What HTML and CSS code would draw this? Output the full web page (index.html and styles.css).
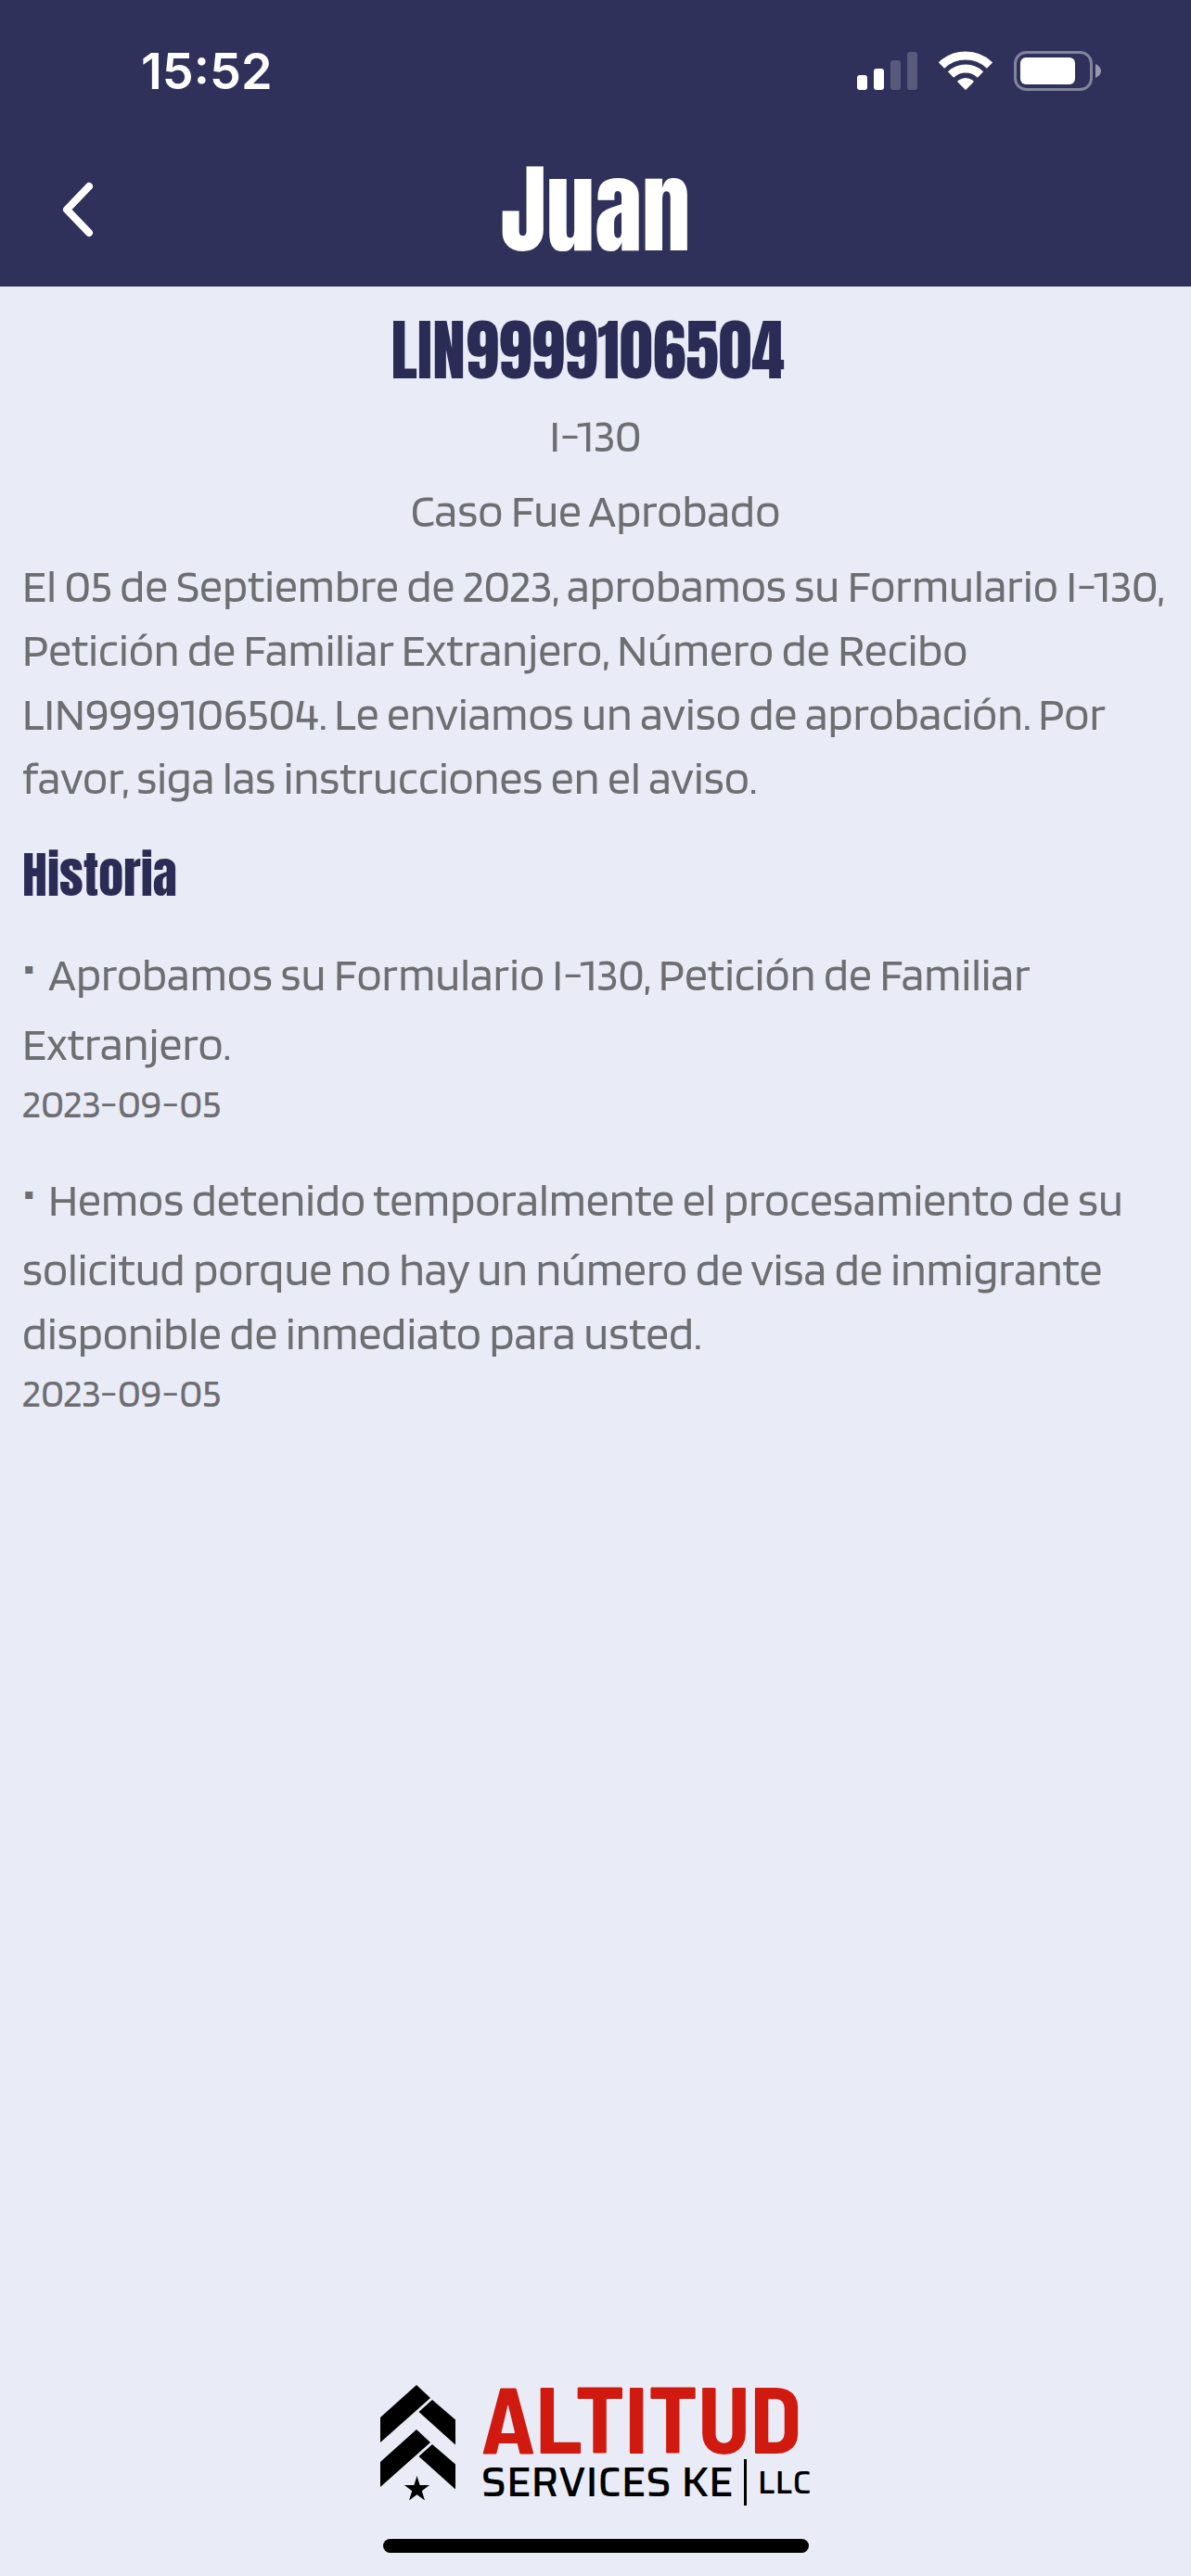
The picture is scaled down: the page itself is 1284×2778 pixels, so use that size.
FILE: index.html
```
<!DOCTYPE html>
<html lang="es">
<head>
	<meta charset="UTF-8">
	<meta name="viewport" content="width=device-width">
	<title>Juan</title>
	<link rel="stylesheet" href="styles.css">
</head>
<body>
	<header class="top">
		<div class="status">
			<span class="time">15:52</span>
			<div class="icons">
				<svg width="65" height="43" viewBox="0 0 65 43" fill="#fff">
					<rect x="0" y="26" width="11" height="16" rx="3"/>
					<rect x="18" y="19" width="11" height="23" rx="3"/>
					<rect x="36" y="10" width="11" height="32" rx="3" opacity=".2"/>
					<rect x="54" y="1" width="11" height="41" rx="3" opacity=".2"/>
				</svg>
				<svg width="58" height="43" viewBox="0 0 58 43">
					<g fill="none" stroke="#fff" stroke-width="9">
						<path d="M3 15.500A37.500 37.500 0 0 1 55 15.500"/>
						<path d="M13 25.500A23 23 0 0 1 45 25.500"/>
					</g>
					<path d="M29 42L20.500 33.500Q20 32.500 21 31.800Q29 26 37 31.800Q38 32.500 37.500 33.500Z" fill="#fff"/>
				</svg>
				<svg width="94" height="43" viewBox="0 0 94 43">
					<rect x="1.500" y="1.500" width="82" height="40" rx="12" fill="none" stroke="#fff" stroke-width="3" opacity=".4"/>
					<rect x="7" y="7" width="59" height="29" rx="6" fill="#fff"/>
					<path d="M88 14Q94 17 94 21.500Q94 26 88 29Z" fill="#fff" opacity=".5"/>
				</svg>
			</div>
		</div>
		<div class="bar">
			<button class="back" type="button" aria-label="Volver">
				<svg width="34" height="60" viewBox="0 0 34 60" fill="none" stroke="#fff" stroke-width="8" stroke-linecap="round" stroke-linejoin="round"><path d="M29 5L5 30L29 55"/></svg>
			</button>
			<h1>Juan</h1>
		</div>
	</header>

	<main class="case">
		<h2 class="receipt">LIN9999106504&nbsp;</h2>
		<p class="center">I-130</p>
		<p class="center">Caso Fue Aprobado</p>
		<p>El 05 de Septiembre de 2023, aprobamos su Formulario I-130, Petición de Familiar Extranjero, Número de Recibo LIN9999106504. Le enviamos un aviso de aprobación. Por favor, siga las instrucciones en el aviso.</p>
		<h3>Historia</h3>
		<ul class="history">
			<li>
				<p><span class="dot">▪</span>Aprobamos su Formulario I-130, Petición de Familiar Extranjero.</p>
				<time datetime="2023-09-05">2023-09-05</time>
			</li>
			<li>
				<p><span class="dot">▪</span>Hemos detenido temporalmente el procesamiento de su solicitud porque no hay un número de visa de inmigrante disponible de inmediato para usted.</p>
				<time datetime="2023-09-05">2023-09-05</time>
			</li>
		</ul>
	</main>

	<footer>
		<div class="logo">
			<svg width="81" height="125" viewBox="0 0 81 125">
				<path id="left" d="M0 35L39 0L54 14L0 62Z"/>
				<path id="right" d="M41.500 29L56 16L81 37.500V64.500Z"/>
				<use href="#left" y="48"/>
				<use href="#right" y="48"/>
				<path d="M39.500 98L42.600 108L53 108L44.800 114.200L48 124.500L39.500 118.200L31 124.500L34.200 114.200L26 108L36.400 108Z"/>
			</svg>
			<div class="name">
				<strong>ALTITUD</strong>
				<div class="sub">
					<span>SERVICES KE</span>
					<span class="llc">LLC</span>
				</div>
			</div>
		</div>
		<div class="home"></div>
	</footer>
</body>
</html>
```
FILE: styles.css
```
* {
	margin: 0;
	padding: 0;
	box-sizing: border-box;
}
body {
	min-height: 100vh;
	display: flex;
	flex-direction: column;
	background: #e9ecf6;
	color: #6e6e72;
	font-family: "Blinker", "Open Sans", sans-serif;
	font-size: 50px;
	line-height: 69px;
}
svg {
	display: block;
}

/* header */
.top {
	height: 309px;
	background: #30315a;
	color: #fff;
}
.status {
	display: flex;
	justify-content: space-between;
	align-items: center;
	height: 152px;
	padding: 0 97px 0 152px;
}
.time {
	font-family: "Inter", sans-serif;
	font-size: 54px;
	font-weight: 600;
}
.icons {
	display: flex;
	gap: 23px;
}
.bar {
	display: grid;
	grid-template-columns: 168px 1fr 168px;
	align-items: center;
	height: 148px;
}
.back {
	justify-self: center;
	border: none;
	background: none;
	cursor: pointer;
}
h1, h2, h3 {
	font-family: "Anton", "Roboto Condensed", sans-serif;
	font-weight: 400;
}
h1 {
	font-size: 105px;
	line-height: 148px;
	text-align: center;
}

/* case */
.case {
	padding: 15px 24px;
}
.receipt {
	margin-bottom: 3px;
	color: #2a2c55;
	font-size: 72px;
	line-height: 108px;
	text-align: center;
}
.case > p {
	margin-bottom: 12px;
}
.center {
	text-align: center;
}
h3 {
	margin: 30px 0 26px;
	color: #2a2c55;
	font-size: 54px;
	line-height: 80px;
}
.history {
	list-style: none;
}
.history li {
	margin-bottom: 32px;
}
.history p::first-line {
	line-height: 82px;
}
.history time {
	display: block;
	font-size: 44px;
	line-height: 60px;
}
.dot {
	display: inline-block;
	width: 28px;
	padding-left: 2px;
	font-family: "DejaVu Sans", sans-serif;
	font-size: 16px;
	line-height: 16px;
	vertical-align: 18px;
}

/* footer */
footer {
	display: flex;
	flex-direction: column;
	align-items: center;
	margin-top: auto;
	padding-bottom: 25px;
}
.logo {
	display: flex;
	align-items: flex-start;
	gap: 28px;
	margin-bottom: 36px;
	color: #000;
}
.name {
	width: 356px;
}
.name strong {
	display: block;
	color: #d11a0f;
	font-family: "Barlow Semi Condensed", "Barlow", sans-serif;
	font-size: 102px;
	font-weight: 700;
	line-height: 66px;
}
.sub {
	display: flex;
	justify-content: space-between;
	margin-top: 14px;
	font-family: "Saira", sans-serif;
	font-size: 44px;
	font-weight: 500;
	line-height: 50px;
	white-space: nowrap;
}
.llc {
	padding-left: 12px;
	border-left: 3px solid #000;
	font-size: 35px;
}
.home {
	width: 459px;
	height: 15px;
	border-radius: 8px;
	background: #000;
}
```
